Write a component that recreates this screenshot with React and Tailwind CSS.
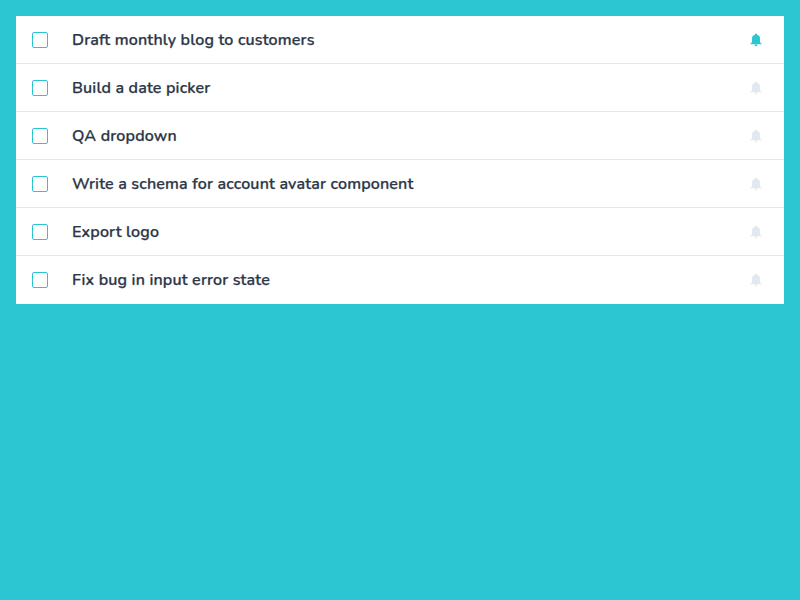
const tasks = [
  { title: "Draft monthly blog to customers", active: true },
  { title: "Build a date picker" },
  { title: "QA dropdown" },
  { title: "Write a schema for account avatar component" },
  { title: "Export logo" },
  { title: "Fix bug in input error state" },
];

function Bell({ active }) {
  return (
    <svg viewBox="0 0 14 14" className={`size-3.5 ${active ? "text-[#2cc5d2]" : "text-[#e2e8f0]"}`} fill="currentColor" aria-hidden="true">
      <path d="M7 .4c-.6 0-1 .4-1 1v.3C4.2 2.1 3 3.5 3 5.3v3.8c0 .4-.3.8-.8 1l-.5.3c-.3.1-.4.3-.4.5 0 .3.2.4.5.4h10.4c.3 0 .5-.1.5-.4 0-.2-.1-.4-.4-.5l-.5-.3c-.5-.2-.8-.6-.8-1V5.3c0-1.8-1.2-3.2-3-3.6v-.3c0-.6-.4-1-1-1Z" />
      <path d="M5.7 11.6h2.6v.3a1.3 1.3 0 0 1-2.6 0Z" />
    </svg>
  );
}

export default function App() {
  return (
    <div className="min-h-screen bg-[#2cc5d2] p-4 font-['Nunito','Open_Sans',sans-serif]">
      <ul className="bg-white">
        {tasks.map((task) => (
          <li key={task.title} className="flex h-12 items-center border-b border-[#e2e8f0] pl-4 pr-[21px] last:border-white">
            <span className="size-4 rounded-[2px] border border-[#2cc5d2]" />
            <span className="ml-6 flex-1 whitespace-nowrap text-base font-semibold leading-5 tracking-[0.165px] text-[#2d3748] [-webkit-text-stroke:0.25px_currentColor]">{task.title}</span>
            <Bell active={task.active} />
          </li>
        ))}
      </ul>
    </div>
  );
}
